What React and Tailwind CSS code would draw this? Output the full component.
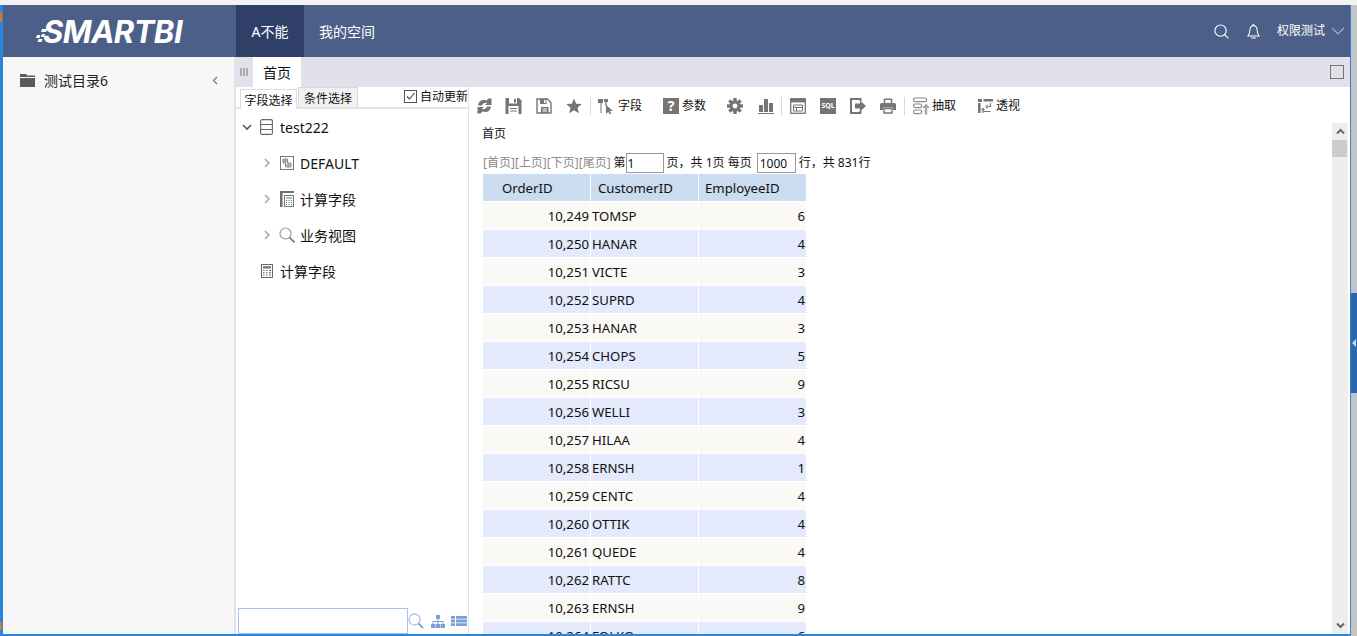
const FONT = '"Noto Sans","Noto Sans CJK SC",sans-serif';

const rows = [
  ['10,249', 'TOMSP', 6], ['10,250', 'HANAR', 4], ['10,251', 'VICTE', 3], ['10,252', 'SUPRD', 4],
  ['10,253', 'HANAR', 3], ['10,254', 'CHOPS', 5], ['10,255', 'RICSU', 9], ['10,256', 'WELLI', 3],
  ['10,257', 'HILAA', 4], ['10,258', 'ERNSH', 1], ['10,259', 'CENTC', 4], ['10,260', 'OTTIK', 4],
  ['10,261', 'QUEDE', 4], ['10,262', 'RATTC', 8], ['10,263', 'ERNSH', 9], ['10,264', 'FOLKO', 6],
];

const G = '#757575';

function Icon({ w = 16, h = 16, vb, children, className = '' }) {
  return (
    <svg width={w} height={h} viewBox={vb || `0 0 ${w} ${h}`} className={'shrink-0 ' + className}>
      {children}
    </svg>
  );
}

const Refresh = () => (
  <Icon w={15} h={16}>
    <path d="M1 7.5 C1.5 3 5 1 9.5 2.5 L11.5 .5 L14.5 .5 L14.5 7 L8 7 L10.2 5 C8 4.3 5.8 5.2 5 7.5 Z" fill={G} />
    <path d="M14 8.5 C13.5 13 10 15 5.5 13.5 L3.5 15.5 L.5 15.5 L.5 9 L7 9 L4.8 11 C7 11.7 9.2 10.8 10 8.5 Z" fill={G} />
  </Icon>
);
const Save = () => (
  <Icon w={17} h={16}>
    <path d="M.5 0H14L16.5 2.5V16H.5Z" fill={G} />
    <rect x="4" y="0" width="8" height="5.5" fill="#fff" />
    <rect x="9" y="1" width="2" height="3.5" fill={G} />
    <rect x="3.5" y="8" width="10" height="8" fill="#fff" />
    <path d="M5 10.5H12M5 13H12" stroke={G} />
  </Icon>
);
const SaveAs = () => (
  <Icon>
    <path d="M1 1H11.5L15 4.5V15H1Z" fill="none" stroke={G} strokeWidth="1.4" />
    <path d="M4 1H10.5V6H4Z M5 9H12.5V15H5Z" fill={G} />
    <rect x="8" y="2" width="1.5" height="3" fill="#fff" />
    <path d="M6.5 11H11M6.5 13H11" stroke="#fff" />
  </Icon>
);
const Star = () => (
  <Icon>
    <path d="M8 .5L10.2 5.7L15.8 6.1L11.5 9.7L12.9 15.3L8 12.3L3.1 15.3L4.5 9.7L.2 6.1L5.8 5.7Z" fill={G} />
  </Icon>
);
const Sep = () => <div className="w-px h-[18px] bg-[#d8d8d8] shrink-0" />;
const FieldIcon = () => (
  <Icon>
    <path d="M0 1H5V5H3.5V15H2.5V5H0Z M6 1H10V4H8.6V8H7.4V4H6Z" fill={G} />
    <path d="M8 7L8 16L10.2 13.8L12 16.8L13.5 16L11.8 13H15Z" fill={G} />
  </Icon>
);
const Question = () => (
  <div className="w-4 h-4 bg-[#757575] text-white text-[14px] font-bold leading-4 text-center shrink-0">?</div>
);
const Gear = () => (
  <Icon>
    <g fill={G}>
      <circle cx="8" cy="8" r="5.6" />
      {[0, 45, 90, 135, 180, 225, 270, 315].map((a) => (
        <rect key={a} x="6.3" y="0" width="3.4" height="3.5" transform={`rotate(${a} 8 8)`} />
      ))}
    </g>
    <circle cx="8" cy="8" r="2.4" fill="#fff" />
  </Icon>
);
const Bars = () => (
  <Icon>
    <path d="M1 7H5V14H1Z M6 1H10V14H6Z M11 5H15V14H11Z" fill={G} />
    <rect x="0" y="15" width="16" height="1" fill={G} />
  </Icon>
);
const Layout = () => (
  <Icon>
    <rect x=".7" y=".7" width="14.6" height="14.6" fill="none" stroke={G} strokeWidth="1.3" />
    <rect x="1" y="1" width="14" height="3.4" fill={G} />
    <path d="M3.5 7H12.5V13H3.5ZM3.5 9.5H12.5M6.5 9.5V13" fill="none" stroke={G} />
  </Icon>
);
const Sql = () => (
  <div className="w-4 h-4 bg-[#757575] text-white text-[7px] font-bold leading-4 text-center shrink-0 overflow-hidden">SQL</div>
);
const ExportI = () => (
  <Icon>
    <path d="M10.5 3V1H1V15H10.5V12.5" fill="none" stroke={G} strokeWidth="2" />
    <path d="M5 5.5H10V2.5L16 8L10 13.5V10.5H5Z" fill={G} />
  </Icon>
);
const Printer = () => (
  <Icon>
    <path d="M4.5 5V1.2H11.5V5" fill="none" stroke={G} strokeWidth="1.5" />
    <path d="M1.5 5H14.5Q16 5 16 6.5V12H13V9.5H3V12H0V6.5Q0 5 1.5 5Z" fill={G} />
    <path d="M4 10.5H12V15H4Z" fill="none" stroke={G} strokeWidth="1.4" />
  </Icon>
);
const Extract = () => (
  <Icon w={17} h={18}>
    <g fill="none" stroke="#8a8a8a" strokeWidth="1.2">
      <rect x=".6" y="1" width="13" height="3.6" rx="1.5" />
      <rect x=".6" y="7" width="8" height="3.6" rx="1.5" />
      <rect x=".6" y="13" width="8" height="3.6" rx="1.5" />
    </g>
    <path d="M9 11L13 6.5L17 11H14.2V17.5H11.8V11Z" fill="#a8a8a8" />
  </Icon>
);
const Pivot = () => (
  <Icon w={15} h={16}>
    <path d="M0 1H4V4H0Z M0 5H2.6V15H0Z M5.5 1H15V3.5H5.5Z" fill={G} />
    <path d="M12.5 5V8.5H10M10 7L8 8.7L10 10.4M5 15V10.5M3.5 12L5 10.5L6.5 12M5 13.5H12.5" fill="none" stroke={G} strokeWidth="1.1" />
  </Icon>
);

const Label = ({ children, className = '' }) => (
  <span className={'text-[12px] text-[#111] leading-none whitespace-nowrap ' + className}>{children}</span>
);

function Toolbar() {
  return (
    <div className="h-[36px] flex items-center shrink-0 pl-[7px] pt-[2px]">
      <Refresh />
      <div className="ml-[13px]"><Save /></div>
      <div className="ml-[14px]"><SaveAs /></div>
      <div className="ml-[14px]"><Star /></div>
      <div className="ml-[8px]"><Sep /></div>
      <div className="ml-[7px]"><FieldIcon /></div>
      <Label className="ml-[4px]">字段</Label>
      <div className="ml-[21px]"><Question /></div>
      <Label className="ml-[3px]">参数</Label>
      <div className="ml-[21px]"><Gear /></div>
      <div className="ml-[15px]"><Bars /></div>
      <div className="ml-[7px]"><Sep /></div>
      <div className="ml-[8px]"><Layout /></div>
      <div className="ml-[14px]"><Sql /></div>
      <div className="ml-[14px]"><ExportI /></div>
      <div className="ml-[14px]"><Printer /></div>
      <div className="ml-[8px]"><Sep /></div>
      <div className="ml-[8px]"><Extract /></div>
      <Label className="ml-[2px]">抽取</Label>
      <div className="ml-[22px]"><Pivot /></div>
      <Label className="ml-[3px]">透视</Label>
    </div>
  );
}

const Chev = ({ down }) => (
  <Icon w={10} h={10}>
    {down ? (
      <path d="M1 3L5 7L9 3" fill="none" stroke="#555" strokeWidth="1.6" />
    ) : (
      <path d="M3 1L7 5L3 9" fill="none" stroke="#aaa" strokeWidth="1.6" />
    )}
  </Icon>
);
const DbIcon = () => (
  <Icon w={13} h={16}>
    <rect x=".6" y=".6" width="11.8" height="14.8" rx="1.5" fill="none" stroke="#666" strokeWidth="1.1" />
    <path d="M1 5.5H12M1 10.5H12" stroke="#666" />
  </Icon>
);
const GridIcon = () => (
  <Icon w={14} h={14}>
    <rect x=".5" y=".5" width="13" height="13" fill="none" stroke="#777" />
    <path d="M3 3H7.5V7H11V11H5.5V7H3ZM5.2 3V7M3 5H7.5M8.2 9H11M8.2 7V11M5.5 9H8" fill="none" stroke="#666" strokeWidth=".8" />
  </Icon>
);
const CalcStack = () => (
  <Icon w={14} h={16}>
    <path d="M0 0H14V2H2.5V16H0Z" fill="#6f6f6f" />
    <rect x="4.5" y="4.5" width="9" height="11" fill="none" stroke="#777" />
    <path d="M6 7H12" stroke="#777" />
    <path d="M6 9.5H7M8.5 9.5H9.5M11 9.5H12M6 11.5H7M8.5 11.5H9.5M11 11.5H12M6 13.5H7M8.5 13.5H9.5M11 13.5H12" stroke="#666" />
  </Icon>
);
const SearchGray = () => (
  <Icon w={16} h={16}>
    <circle cx="6.5" cy="6.5" r="5.5" fill="none" stroke="#999" strokeWidth="1.2" />
    <path d="M10.5 10.5L15.5 15.5" stroke="#777" strokeWidth="1.6" />
  </Icon>
);
const Calc = () => (
  <Icon w={12} h={14}>
    <rect x=".5" y=".5" width="11" height="13" fill="none" stroke="#666" />
    <rect x="2" y="2.2" width="8" height="2.3" fill="#777" />
    <path d="M2 6.5H3.5M5 6.5H6.5M8 6.5H10M2 8.7H3.5M5 8.7H6.5M8 8.7H10M2 11H3.5M5 11H6.5M8 11H10" stroke="#666" />
  </Icon>
);

const TreeRow = ({ level, chev, icon, text }) => (
  <div className="h-[36px] flex items-center text-[14px] text-[#111] whitespace-nowrap">
    <div className={level === 0 ? 'w-[6px]' : 'w-[26px]'} />
    {chev ? <Chev down={chev === 'down'} /> : <div className="w-[10px]" />}
    <div className={level === 0 ? 'w-[8px]' : 'w-[7px]'} />
    <div className={level === 0 ? 'w-[13px] flex justify-center' : 'w-[15px] flex justify-center'}>{icon}</div>
    <span className={level === 0 ? 'ml-[7px]' : 'ml-[6px]'}>{text}</span>
  </div>
);

function LeftPanel() {
  return (
    <div className="w-[233px] h-full flex flex-col border-r border-[#e1e1ea] shrink-0 relative bg-white">
      <div className="h-[22px] flex items-end pl-[4px] border-b-2 border-[#e2e2e2] shrink-0 relative">
        <div className="h-[20px] w-[57px] border border-b-0 border-[#dcdcdc] bg-white text-[12px] text-[#111] text-center leading-[20px] pt-px -mb-[2px]">字段选择</div>
        <div className="h-[20px] w-[60px] ml-px border border-b-0 border-[#d8d8d8] bg-[#f1f1f1] text-[12px] text-[#111] text-center leading-[20px] pt-px">条件选择</div>
        <div className="flex items-center ml-[46px] mb-[2px] self-center">
          <div className="w-[13px] h-[13px] border border-[#555] flex items-center justify-center">
            <svg width="11" height="11" viewBox="0 0 11 11"><path d="M2 5.5L4.5 8L9.5 2" fill="none" stroke="#444" strokeWidth="1.1" /></svg>
          </div>
          <span className="text-[12px] text-[#111] ml-[3px] mt-[2px] whitespace-nowrap leading-none">自动更新</span>
        </div>
      </div>
      <div className="flex-1">
        <TreeRow level={0} chev="down" icon={<DbIcon />} text="test222" />
        <TreeRow level={1} chev="right" icon={<GridIcon />} text="DEFAULT" />
        <TreeRow level={1} chev="right" icon={<CalcStack />} text="计算字段" />
        <TreeRow level={1} chev="right" icon={<SearchGray />} text="业务视图" />
        <TreeRow level={0} icon={<Calc />} text="计算字段" />
      </div>
      <div className="flex items-center pl-[2px] shrink-0">
        <input readOnly className="w-[170px] h-[26px] border border-[#a9c4ea] bg-white outline-none" />
        <Icon w={16} h={16}>
          <circle cx="6.5" cy="6.5" r="5.5" fill="none" stroke="#a9c4ea" strokeWidth="1.3" />
          <path d="M10.5 10.5L15 15" stroke="#7d9fd8" strokeWidth="1.8" />
        </Icon>
        <Icon w={14} h={13} className="ml-[7px]">
          <path d="M5 0H9V4H7.5V6H12.5V9H14V13H9.5V9H11.5V7H7.5V9H9V13H5V9H6.5V7H2.5V9H4.5V13H0V9H1.5V6H6.5V4H5Z" fill="#7d9fd8" />
        </Icon>
        <Icon w={16} h={10} className="ml-[6px]">
          <path d="M0 0H4V2.8H0ZM5 0H16V2.8H5ZM0 3.6H4V6.4H0ZM5 3.6H16V6.4H5ZM0 7.2H4V10H0ZM5 7.2H16V10H5Z" fill="#7d9fd8" />
        </Icon>
      </div>
    </div>
  );
}

const Th = ({ children, className = '' }) => (
  <div className={'bg-[#cbdbf0] text-[13.2px] text-[#111] leading-[29px] whitespace-nowrap ' + className}>{children}</div>
);
const Td = ({ c, right, className = '' }) => (
  <div className={`text-[13.2px] text-[#111] leading-[29px] whitespace-nowrap ${right ? 'text-right pr-px' : 'pl-px'} ${className}`}>{c}</div>
);

function ReportTable() {
  return (
    <div className="grid grid-cols-[107px_107px_107px] auto-rows-[27px] gap-px w-[323px] bg-white">
      <Th className="pl-[19px]">OrderID</Th>
      <Th className="pl-[7px]">CustomerID</Th>
      <Th className="pl-[6px]">EmployeeID</Th>
      {rows.map((r, i) => {
        const bg = i % 2 === 0 ? 'bg-[#faf9f5]' : 'bg-[#e4e9fc]';
        return [
          <Td key={i + 'a'} c={r[0]} right className={bg} />,
          <Td key={i + 'b'} c={r[1]} className={bg} />,
          <Td key={i + 'c'} c={r[2]} right className={bg} />,
        ];
      })}
    </div>
  );
}

function Scrollbar() {
  return (
    <div className="w-[16px] h-full bg-[#eeeeee] flex flex-col shrink-0">
      <div className="h-[17px] flex items-center justify-center">
        <svg width="9" height="7" viewBox="0 0 9 7"><path d="M1 5.5L4.5 2L8 5.5" fill="none" stroke="#666" strokeWidth="2" /></svg>
      </div>
      <div className="h-[17px] w-[15px] bg-[#cccccc]" />
      <div className="flex-1" />
      <div className="h-[17px] flex items-center justify-center">
        <svg width="9" height="7" viewBox="0 0 9 7"><path d="M1 1.5L4.5 5L8 1.5" fill="none" stroke="#666" strokeWidth="2" /></svg>
      </div>
    </div>
  );
}

function Content() {
  const linkCls = 'text-[#8a8a8a]';
  return (
    <div className="flex-1 min-w-0 h-full flex flex-col bg-white">
      <Toolbar />
      <div className="flex-1 min-h-0 flex">
        <div className="flex-1 min-w-0 pl-[12px] overflow-hidden">
          <div className="h-[22px] flex items-center text-[12px] text-[#111] leading-none">首页</div>
          <div className="h-[22px] flex items-center pl-px text-[12px] text-[#111] whitespace-nowrap mt-[7px]">
            <span className={linkCls}>[首页][上页][下页][尾页]</span>
            <span className="ml-[3px]">第</span>
            <input readOnly value="1" className="w-[38px] h-[20px] border border-[#999] px-px text-[12px] outline-none" />
            <span className="ml-[3px]">页，共 1页 每页</span>
            <input readOnly value="1000" className="w-[39px] h-[20px] ml-[5px] border border-[#999] pl-[2px] text-[12px] outline-none" />
            <span className="ml-[3px]">行，共 831行</span>
          </div>
          <div className="pl-px"><ReportTable /></div>
        </div>
        <Scrollbar />
        <div className="w-[2px]" />
      </div>
    </div>
  );
}

function Header() {
  return (
    <div className="h-[52px] bg-[#4c5f88] flex items-stretch shrink-0 text-white">
      <div className="w-[233px] shrink-0 flex items-center pl-[33px]">
        <svg width="13" height="17" viewBox="0 0 13 17" className="shrink-0 mt-[6px]">
          <path d="M6 3H11L10 6H5Z M1 9H4.5L3.5 12H0Z M6 8H9L8 11H5Z M2.5 13H6.5L5.5 16H1.5Z" fill="#fff" />
        </svg>
        <span className="text-[31px] font-bold italic leading-none -ml-[6px] tracking-[-0.5px]" style={{ fontFamily: 'Inter, sans-serif' }}>SMARTBI</span>
      </div>
      <div className="w-[68px] bg-[#2f3f68] flex items-center justify-center text-[14px]">A不能</div>
      <div className="ml-[15px] flex items-center text-[14px]">我的空间</div>
      <div className="flex-1" />
      <div className="flex items-center pr-[5px]">
        <svg width="15" height="15" viewBox="0 0 16 16"><circle cx="7" cy="7" r="6" fill="none" stroke="#fff" strokeWidth="1.2" /><path d="M11.3 11.3L15.3 15.3" stroke="#fff" strokeWidth="1.2" /></svg>
        <svg width="13" height="15" viewBox="0 0 14 16" className="ml-[18px]"><path d="M7 1.8C4 1.8 3 4.5 3 7.5C3 10 2 11 1 12.8H13C12 11 11 10 11 7.5C11 4.5 10 1.8 7 1.8Z M5.5 1.8Q7 -.3 8.5 1.8 M4.5 15H9.5" fill="none" stroke="#fff" strokeWidth="1.1" /></svg>
        <span className="ml-[17px] text-[12px] whitespace-nowrap">权限测试</span>
        <svg width="14" height="8" viewBox="0 0 14 8" className="ml-[6px]"><path d="M1 1L7 7L13 1" fill="none" stroke="#aab4c8" strokeWidth="1.1" /></svg>
      </div>
    </div>
  );
}

function Sidebar() {
  return (
    <div className="w-[231px] bg-[#f7f7f7] flex items-start shrink-0">
      <div className="h-[47px] w-full flex items-center pl-[17px] pr-[16px]">
        <svg width="15" height="13" viewBox="0 0 15 13" className="shrink-0"><path d="M0 0H6L7 1.5H15V3H0ZM0 4H15V13H0Z" fill="#5a5a5a" /></svg>
        <span className="ml-[9px] text-[14px] text-[#222]">测试目录6</span>
        <div className="flex-1" />
        <svg width="6" height="9" viewBox="0 0 6 9"><path d="M5 1L1.5 4.5L5 8" fill="none" stroke="#777" strokeWidth="1.2" /></svg>
      </div>
    </div>
  );
}

export default function App() {
  return (
    <div className="w-[1357px] h-[636px] overflow-hidden flex flex-col relative bg-[#f3f3f3]" style={{ fontFamily: FONT }}>
      <div className="h-[5px] shrink-0 bg-[#f3f3f3]" />
      <div className="flex-1 min-h-0 flex">
        <div className="w-[1351px] h-full flex flex-col border-l-[3px] border-r border-b-2 border-[#2a86d8] bg-white">
          <Header />
          <div className="flex-1 min-h-0 flex">
            <Sidebar />
            <div className="flex-1 min-w-0 flex flex-col">
              <div className="h-[30px] bg-[#e1e1ea] flex items-stretch shrink-0">
                <div className="w-[19px] flex items-center justify-center">
                  <svg width="8" height="8" viewBox="0 0 8 8"><path d="M1 0V8M4 0V8M7 0V8" stroke="#777" /></svg>
                </div>
                <div className="w-[48px] bg-white text-[14px] text-[#111] flex items-center justify-center">首页</div>
                <div className="flex-1" />
                <div className="flex items-center pr-[6px]"><div className="w-[14px] h-[14px] border border-[#777]" /></div>
              </div>
              <div className="flex-1 min-h-0 flex border-l-2 border-[#e1e1ea]">
                <LeftPanel />
                <div className="w-px shrink-0 bg-white" />
                <Content />
              </div>
            </div>
          </div>
        </div>
        <div className="w-[6px] bg-[#c4c4c4] flex flex-col items-stretch">
          <div className="mt-[288px] h-[100px] bg-[#2d66ad] flex items-center justify-center">
            <div className="w-0 h-0 border-y-[4px] border-y-transparent border-r-[4px] border-r-[#d0d8e8]" />
          </div>
        </div>
      </div>
      <div className="absolute left-0 top-[12px] w-[2px] h-[10px] bg-[#d8782a]" />
      <div className="absolute left-0 top-[622px] w-[2px] h-[8px] bg-[#c08040]" />
    </div>
  );
}
